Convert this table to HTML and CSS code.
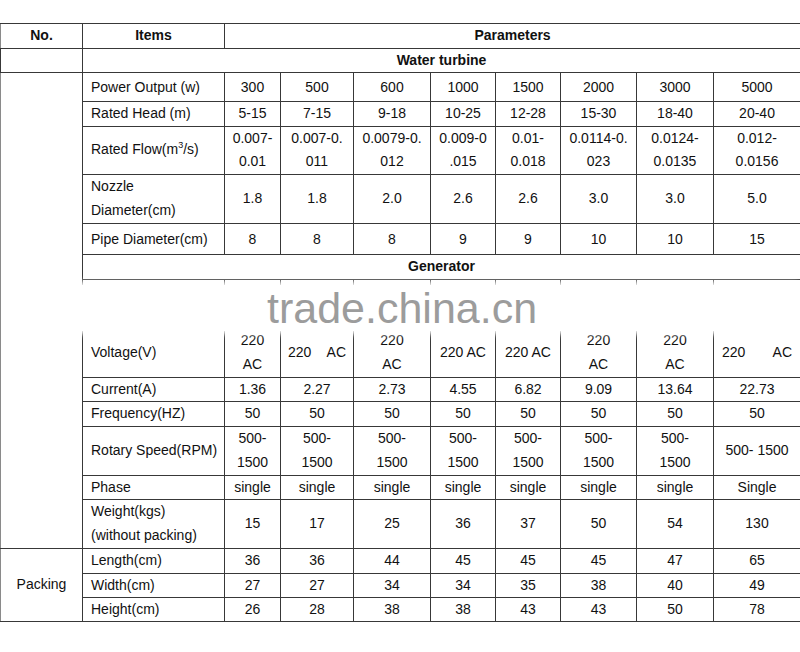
FILE: index.html
```html
<!DOCTYPE html>
<html>
<head>
<meta charset="utf-8">
<link rel="stylesheet" href="styles.css">
</head>
<body>
<div class="sheet">
<table class="spec">
<colgroup>
<col class="c0"><col class="c1"><col class="c2"><col class="c3"><col class="c4"><col class="c5"><col class="c6"><col class="c7"><col class="c8"><col class="c9">
</colgroup>
<tr class="head">
<td>No.</td><td>Items</td><td colspan="8">Parameters</td>
</tr>
<tr class="head">
<td></td><td colspan="9">Water turbine</td>
</tr>
<tr class="power">
<td rowspan="12"></td><td class="lbl">Power Output (w)</td><td>300</td><td>500</td><td>600</td><td>1000</td><td>1500</td><td>2000</td><td>3000</td><td>5000</td>
</tr>
<tr>
<td class="lbl">Rated Head (m)</td><td>5-15</td><td>7-15</td><td>9-18</td><td>10-25</td><td>12-28</td><td>15-30</td><td>18-40</td><td>20-40</td>
</tr>
<tr class="two">
<td class="lbl">Rated Flow(m<sup>3</sup>/s)</td><td>0.007-<br>0.01</td><td>0.007-0.<br>011</td><td>0.0079-0.<br>012</td><td>0.009-0<br>.015</td><td>0.01-<br>0.018</td><td>0.0114-0.<br>023</td><td>0.0124-<br>0.0135</td><td>0.012-<br>0.0156</td>
</tr>
<tr class="two">
<td class="lbl">Nozzle<br>Diameter(cm)</td><td>1.8</td><td>1.8</td><td>2.0</td><td>2.6</td><td>2.6</td><td>3.0</td><td>3.0</td><td>5.0</td>
</tr>
<tr class="pipe">
<td class="lbl">Pipe Diameter(cm)</td><td>8</td><td>8</td><td>8</td><td>9</td><td>9</td><td>10</td><td>10</td><td>15</td>
</tr>
<tr class="head">
<td colspan="9">Generator</td>
</tr>
<tr class="two volt">
<td class="lbl">Voltage(V)</td><td>220<br>AC</td><td><span class="spread w56">220<span>AC</span></span></td><td>220<br>AC</td><td>220 AC</td><td>220 AC</td><td>220<br>AC</td><td>220<br>AC</td><td><span class="spread w70">220<span>AC</span></span></td>
</tr>
<tr>
<td class="lbl">Current(A)</td><td>1.36</td><td>2.27</td><td>2.73</td><td>4.55</td><td>6.82</td><td>9.09</td><td>13.64</td><td>22.73</td>
</tr>
<tr>
<td class="lbl">Frequency(HZ)</td><td>50</td><td>50</td><td>50</td><td>50</td><td>50</td><td>50</td><td>50</td><td>50</td>
</tr>
<tr class="two">
<td class="lbl">Rotary Speed(RPM)</td><td>500-<br>1500</td><td>500-<br>1500</td><td>500-<br>1500</td><td>500-<br>1500</td><td>500-<br>1500</td><td>500-<br>1500</td><td>500-<br>1500</td><td>500- 1500</td>
</tr>
<tr>
<td class="lbl">Phase</td><td>single</td><td>single</td><td>single</td><td>single</td><td>single</td><td>single</td><td>single</td><td>Single</td>
</tr>
<tr class="two">
<td class="lbl">Weight(kgs)<br>(without packing)</td><td>15</td><td>17</td><td>25</td><td>36</td><td>37</td><td>50</td><td>54</td><td>130</td>
</tr>
<tr>
<td rowspan="3">Packing</td><td class="lbl">Length(cm)</td><td>36</td><td>36</td><td>44</td><td>45</td><td>45</td><td>45</td><td>47</td><td>65</td>
</tr>
<tr>
<td class="lbl">Width(cm)</td><td>27</td><td>27</td><td>34</td><td>34</td><td>35</td><td>38</td><td>40</td><td>49</td>
</tr>
<tr class="last">
<td class="lbl">Height(cm)</td><td>26</td><td>28</td><td>38</td><td>38</td><td>43</td><td>43</td><td>50</td><td>78</td>
</tr>
</table>
<div class="mark"><span class="mark-text">trade.china.cn</span></div>
</div>
</body>
</html>
```

FILE: styles.css
```css
html, body {
  margin: 0;
  padding: 0;
  background: #ffffff;
}
.sheet {
  position: relative;
  padding-top: 23px;
  width: 800px;
  height: 629px;
}
.spec {
  border-collapse: collapse;
  table-layout: fixed;
  width: 800px;
  font-family: "Liberation Sans", Arial, sans-serif;
  font-size: 14px;
  color: #111111;
}
.c0 { width: 82px; }
.c1 { width: 142px; }
.c2 { width: 56px; }
.c3 { width: 73px; }
.c4 { width: 77px; }
.c5 { width: 65px; }
.c6 { width: 65px; }
.c7 { width: 76px; }
.c8 { width: 77px; }
.c9 { width: 87px; }
.spec td {
  border: 1px solid #383838;
  padding: 0;
  text-align: center;
  vertical-align: middle;
  line-height: 23.7px;
  white-space: nowrap;
  overflow: hidden;
}
.spec tr > td:first-child[rowspan],
.spec tr:first-child > td:first-child {
  border-left-color: #8a8a8a;
}
.spec td.lbl {
  text-align: left;
  padding-left: 8px;
}
.head td {
  font-weight: bold;
}
.power td {
  padding-top: 2.4px;
  padding-bottom: 1.4px;
}
.pipe td {
  padding-top: 3.8px;
  padding-bottom: 3px;
}
.two td {
  line-height: 23.8px;
}
.volt td {
  padding-top: 49px;
}
.last td {
  line-height: 23px;
}
.spec sup {
  font-size: 9px;
  line-height: 0;
  vertical-align: 6px;
}
.spread {
  display: inline-flex;
  justify-content: space-between;
}
.w56 { width: 58px; }
.w70 { width: 70px; }
.mark {
  position: absolute;
  left: 70px;
  right: 4px;
  top: 285px;
  height: 46px;
  background: #ffffff;
  box-shadow: 0 0 6px 3px #ffffff;
}
.mark-text {
  position: absolute;
  left: 197px;
  top: -2px;
  font-family: "Liberation Sans", Arial, sans-serif;
  font-size: 43px;
  line-height: 50px;
  color: #9c9c9c;
}
```
